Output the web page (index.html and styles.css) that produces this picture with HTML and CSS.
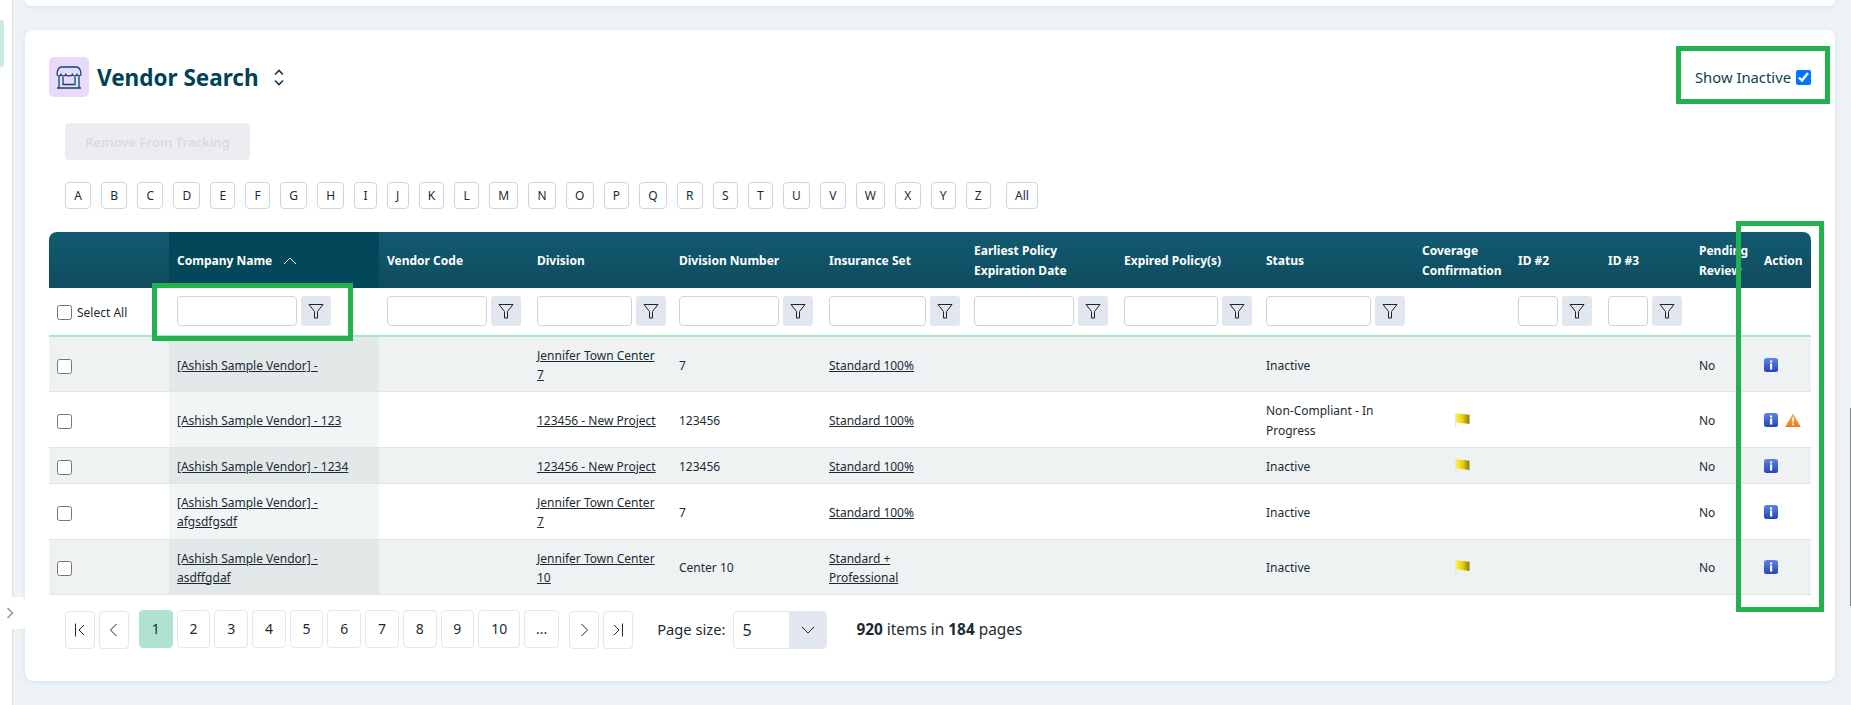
FILE: index.html
```html
<!DOCTYPE html>
<html lang="en">
<head>
    <meta charset="UTF-8">
    <meta name="viewport" content="width=device-width, initial-scale=1.0">
    <title>Vendor Search</title>
    <link rel="stylesheet" href="styles.css">
</head>
<body>

<svg class="svg-defs" aria-hidden="true">
    <defs>
        <linearGradient id="infoFill" x1="0" y1="0" x2="0" y2="1">
            <stop offset="0" stop-color="#5f86e6"/>
            <stop offset="1" stop-color="#2445b8"/>
        </linearGradient>
        <linearGradient id="warnFill" x1="0" y1="0" x2="0" y2="1">
            <stop offset="0" stop-color="#fbb450"/>
            <stop offset="1" stop-color="#ee7a12"/>
        </linearGradient>
        <linearGradient id="flagFill" x1="0" y1="0" x2="1" y2="0">
            <stop offset="0" stop-color="#fff04a"/>
            <stop offset="0.5" stop-color="#e8cf10"/>
            <stop offset="1" stop-color="#8f7a08"/>
        </linearGradient>
    </defs>
    <symbol id="funnel" viewBox="0 0 16 16">
        <path d="M1 1.5H15L9.5 8.5V15H6.5V8.5Z" fill="none" stroke="#222" stroke-width="1"/>
    </symbol>
    <symbol id="info" viewBox="0 0 14 14">
        <rect x="0" y="0" width="14" height="14" rx="2.5" fill="url(#infoFill)"/>
        <rect x="6" y="2.5" width="2.2" height="2" fill="#fff"/>
        <rect x="6" y="5.5" width="2.2" height="6" fill="#fff"/>
    </symbol>
    <symbol id="warn" viewBox="0 0 16 14">
        <path d="M8 0.5L15.8 14H0.2Z" fill="url(#warnFill)"/>
        <rect x="7.2" y="4.5" width="1.6" height="5" fill="#fff"/>
        <rect x="7.2" y="10.5" width="1.6" height="1.7" fill="#fff"/>
    </symbol>
    <symbol id="flag" viewBox="0 0 15 14">
        <path d="M0.8 1V14" stroke="#e3e3d8" stroke-width="1.2"/>
        <path d="M1 0.3C5 0.6 9 1.2 14.5 1.8V11C9 10.6 5 10 1 9.3Z" fill="url(#flagFill)"/>
    </symbol>
</svg>

<div class="page">
    <div class="side-strip">
        <span class="side-tab"></span>
    </div>

    <div class="side-toggle">
        <svg width="8" height="12" viewBox="0 0 8 12"><path d="M1.5 1L6.5 6L1.5 11" fill="none" stroke="#8e9aa6" stroke-width="1.6"/></svg>
    </div>

    <main class="content">
        <div class="top-card"></div>

        <section class="card">
            <div class="card-head">
                <div class="title-group">
                    <span class="title-icon">
                        <svg width="26" height="23" viewBox="0 0 26 23" fill="none" stroke="#0c4a5e" stroke-width="1.3">
                            <path d="M5.5 1H20.5C23 1 25 4.5 25 8C25 10.4 21.8 10.4 21 8.4C20.2 10.4 17.2 10.4 16.4 8.4C15.6 10.4 10.6 10.4 9.8 8.4C9 10.4 5.8 10.4 5 8.4C4.2 10.4 1 10.4 1 8C1 4.5 3 1 5.5 1Z"/>
                            <path d="M3 10.5V21.5M23 10.5V21.5M1 22H25"/>
                            <path d="M7 11V18.5H19V11"/>
                        </svg>
                    </span>
                    <h1 class="title">Vendor Search</h1>
                    <svg class="title-toggle" width="10" height="17" viewBox="0 0 10 17" fill="none" stroke="#17344a" stroke-width="1.6">
                        <path d="M1 5.5L5 1.5L9 5.5"/>
                        <path d="M1 11.5L5 15.5L9 11.5"/>
                    </svg>
                </div>
                <label class="show-inactive">
                    Show Inactive
                    <input type="checkbox" checked>
                </label>
            </div>

            <button class="remove-button" disabled>Remove From Tracking</button>

            <div class="alpha-row">
                <a class="alpha">A</a><a class="alpha">B</a><a class="alpha">C</a><a class="alpha">D</a><a class="alpha">E</a><a class="alpha">F</a><a class="alpha">G</a><a class="alpha">H</a><a class="alpha">I</a><a class="alpha">J</a><a class="alpha">K</a><a class="alpha">L</a><a class="alpha">M</a><a class="alpha">N</a><a class="alpha">O</a><a class="alpha">P</a><a class="alpha">Q</a><a class="alpha">R</a><a class="alpha">S</a><a class="alpha">T</a><a class="alpha">U</a><a class="alpha">V</a><a class="alpha">W</a><a class="alpha">X</a><a class="alpha">Y</a><a class="alpha">Z</a><a class="alpha alpha-all">All</a>
            </div>

            <table class="grid">
                <colgroup>
                    <col class="c-120"><col class="c-210"><col class="c-150"><col class="c-142"><col class="c-150"><col class="c-145"><col class="c-150"><col class="c-142"><col class="c-156"><col class="c-96"><col class="c-90"><col class="c-91"><col class="c-65"><col class="c-55">
                </colgroup>
                <thead>
                    <tr class="head-row">
                        <th></th>
                        <th class="sorted">Company Name
                            <svg class="sort-arrow" width="14" height="8" viewBox="0 0 14 8" fill="none" stroke="#fff" stroke-width="1"><path d="M1 7L7 1L13 7"/></svg>
                        </th>
                        <th>Vendor Code</th>
                        <th>Division</th>
                        <th>Division Number</th>
                        <th>Insurance Set</th>
                        <th>Earliest Policy Expiration Date</th>
                        <th>Expired Policy(s)</th>
                        <th>Status</th>
                        <th>Coverage Confirmation</th>
                        <th>ID #2</th>
                        <th>ID #3</th>
                        <th>Pending Review</th>
                        <th>Action</th>
                    </tr>
                    <tr class="filter-row">
                        <td><label class="select-all"><input type="checkbox" class="row-check"> Select All</label></td>
                        <td><div class="filter"><input class="filter-input f-120"><button class="filter-button"><svg><use href="#funnel"/></svg></button></div></td>
                        <td><div class="filter"><input class="filter-input f-100"><button class="filter-button"><svg><use href="#funnel"/></svg></button></div></td>
                        <td><div class="filter"><input class="filter-input f-95"><button class="filter-button"><svg><use href="#funnel"/></svg></button></div></td>
                        <td><div class="filter"><input class="filter-input f-100"><button class="filter-button"><svg><use href="#funnel"/></svg></button></div></td>
                        <td><div class="filter"><input class="filter-input f-97"><button class="filter-button"><svg><use href="#funnel"/></svg></button></div></td>
                        <td><div class="filter"><input class="filter-input f-100"><button class="filter-button"><svg><use href="#funnel"/></svg></button></div></td>
                        <td><div class="filter"><input class="filter-input f-94"><button class="filter-button"><svg><use href="#funnel"/></svg></button></div></td>
                        <td><div class="filter"><input class="filter-input f-105"><button class="filter-button"><svg><use href="#funnel"/></svg></button></div></td>
                        <td></td>
                        <td><div class="filter"><input class="filter-input f-40"><button class="filter-button"><svg><use href="#funnel"/></svg></button></div></td>
                        <td><div class="filter"><input class="filter-input f-40"><button class="filter-button"><svg><use href="#funnel"/></svg></button></div></td>
                        <td></td>
                        <td></td>
                    </tr>
                </thead>
                <tbody>
                    <tr class="row-a">
                        <td><input type="checkbox" class="row-check"></td>
                        <td class="sorted"><a>[Ashish Sample Vendor] -</a></td>
                        <td></td>
                        <td><a>Jennifer Town Center 7</a></td>
                        <td>7</td>
                        <td><a>Standard 100%</a></td>
                        <td></td><td></td>
                        <td>Inactive</td>
                        <td></td><td></td><td></td>
                        <td>No</td>
                        <td><svg class="act"><use href="#info"/></svg></td>
                    </tr>
                    <tr>
                        <td><input type="checkbox" class="row-check"></td>
                        <td class="sorted"><a>[Ashish Sample Vendor] - 123</a></td>
                        <td></td>
                        <td><a>123456 - New Project</a></td>
                        <td>123456</td>
                        <td><a>Standard 100%</a></td>
                        <td></td><td></td>
                        <td>Non-Compliant - In Progress</td>
                        <td><svg class="flag"><use href="#flag"/></svg></td>
                        <td></td><td></td>
                        <td>No</td>
                        <td><svg class="act"><use href="#info"/></svg><svg class="act warn"><use href="#warn"/></svg></td>
                    </tr>
                    <tr class="row-a">
                        <td><input type="checkbox" class="row-check"></td>
                        <td class="sorted"><a>[Ashish Sample Vendor] - 1234</a></td>
                        <td></td>
                        <td><a>123456 - New Project</a></td>
                        <td>123456</td>
                        <td><a>Standard 100%</a></td>
                        <td></td><td></td>
                        <td>Inactive</td>
                        <td><svg class="flag"><use href="#flag"/></svg></td>
                        <td></td><td></td>
                        <td>No</td>
                        <td><svg class="act"><use href="#info"/></svg></td>
                    </tr>
                    <tr>
                        <td><input type="checkbox" class="row-check"></td>
                        <td class="sorted"><a>[Ashish Sample Vendor] - afgsdfgsdf</a></td>
                        <td></td>
                        <td><a>Jennifer Town Center 7</a></td>
                        <td>7</td>
                        <td><a>Standard 100%</a></td>
                        <td></td><td></td>
                        <td>Inactive</td>
                        <td></td><td></td><td></td>
                        <td>No</td>
                        <td><svg class="act"><use href="#info"/></svg></td>
                    </tr>
                    <tr class="row-a">
                        <td><input type="checkbox" class="row-check"></td>
                        <td class="sorted"><a>[Ashish Sample Vendor] - asdffgdaf</a></td>
                        <td></td>
                        <td><a>Jennifer Town Center 10</a></td>
                        <td>Center 10</td>
                        <td><a>Standard + Professional</a></td>
                        <td></td><td></td>
                        <td>Inactive</td>
                        <td><svg class="flag"><use href="#flag"/></svg></td>
                        <td></td><td></td>
                        <td>No</td>
                        <td><svg class="act"><use href="#info"/></svg></td>
                    </tr>
                </tbody>
            </table>

            <div class="pager">
                <button class="page-nav">
                    <svg width="14" height="14" viewBox="0 0 14 14" fill="none" stroke="#222" stroke-width="1"><path d="M2.5 0.5V13.5"/><path d="M11 2L6 7L11 12"/></svg>
                </button>
                <button class="page-nav">
                    <svg width="14" height="14" viewBox="0 0 14 14" fill="none" stroke="#222" stroke-width="1"><path d="M9.5 1L3.5 7L9.5 13"/></svg>
                </button>
                <div class="page-numbers">
                    <button class="page-num current">1</button>
                    <button class="page-num">2</button>
                    <button class="page-num">3</button>
                    <button class="page-num">4</button>
                    <button class="page-num">5</button>
                    <button class="page-num">6</button>
                    <button class="page-num">7</button>
                    <button class="page-num">8</button>
                    <button class="page-num">9</button>
                    <button class="page-num wide">10</button>
                    <button class="page-num">...</button>
                </div>
                <button class="page-nav next">
                    <svg width="14" height="14" viewBox="0 0 14 14" fill="none" stroke="#222" stroke-width="1"><path d="M4.5 1L10.5 7L4.5 13"/></svg>
                </button>
                <button class="page-nav">
                    <svg width="14" height="14" viewBox="0 0 14 14" fill="none" stroke="#222" stroke-width="1"><path d="M3 2L8 7L3 12"/><path d="M11.5 0.5V13.5"/></svg>
                </button>
                <span class="size-label">Page size:</span>
                <div class="size-select">
                    <span class="size-value">5</span>
                    <span class="size-arrow">
                        <svg width="14" height="8" viewBox="0 0 14 8" fill="none" stroke="#222" stroke-width="1"><path d="M1 1L7 7L13 1"/></svg>
                    </span>
                </div>
                <span class="page-info"><b>920</b> items in <b>184</b> pages</span>
            </div>
        </section>
    </main>

    <!-- green boxes drawn on top of the screenshot -->
    <div class="mark mark-inactive"></div>
    <div class="mark mark-filter"></div>
    <div class="mark mark-action"></div>
    <div class="scroll-sliver"></div>
</div>

</body>
</html>
```

FILE: styles.css
```css
* {
    box-sizing: border-box;
}

body {
    font-family: "Noto Sans", "Open Sans", sans-serif;
    font-size: 12px;
    color: #1c2b33;
    margin: 0;
    background-color: #edf2f6;
}

.svg-defs {
    position: absolute;
    width: 0;
    height: 0;
}

.page {
    position: relative;
    display: flex;
    width: 1851px;
    height: 705px;
    overflow: hidden;
}

.side-strip {
    width: 13px;
    flex-shrink: 0;
    padding-top: 20px;
    background-color: #fff;
    border-right: 1px solid #dde2e7;
}

.side-tab {
    display: block;
    width: 4px;
    height: 47px;
    background-color: #c9ebdd;
    border-radius: 0 3px 3px 0;
}

.side-toggle {
    position: absolute;
    left: 0;
    top: 597px;
    width: 25px;
    height: 32px;
    padding-left: 6px;
    display: flex;
    align-items: center;
    background-color: #fff;
    border-radius: 0 4px 4px 0;
}

.content {
    flex: 1;
    padding: 0 16px 0 12px;
}

.top-card {
    height: 6px;
    background-color: #fff;
    border-radius: 0 0 8px 8px;
    box-shadow: 0 1px 4px rgba(0, 0, 0, 0.08);
}

.card {
    height: 651px;
    margin-top: 24px;
    padding: 27px 24px 0;
    background-color: #fff;
    border-radius: 8px;
    box-shadow: 0 1px 4px rgba(0, 0, 0, 0.08);
}

.card-head {
    display: flex;
    align-items: center;
    justify-content: space-between;
    height: 40px;
}

.title-group {
    display: flex;
    align-items: center;
}

.title-icon {
    display: flex;
    align-items: center;
    justify-content: center;
    width: 40px;
    height: 40px;
    background-color: #e8d9fd;
    border-radius: 5px;
}

.title {
    margin: 0 0 0 8px;
    font-size: 22.5px;
    font-weight: 700;
    color: #004358;
}

.title-toggle {
    margin-left: 15px;
}

.show-inactive {
    display: flex;
    align-items: center;
    font-size: 14.8px;
    color: #0b3f52;
}

.show-inactive input {
    width: 15px;
    height: 15px;
    margin: 0 0 0 5px;
}

.remove-button {
    display: block;
    width: 185px;
    height: 37px;
    margin: 26px 0 0 16px;
    font-family: inherit;
    font-size: 13px;
    font-weight: 600;
    color: #d9dbe0;
    background-color: #ecedf1;
    border: none;
    border-radius: 4px;
}

.alpha-row {
    display: flex;
    gap: 10px;
    margin: 22px 0 23px 16px;
}

.alpha {
    height: 27px;
    padding: 0 8.2px;
    line-height: 26px;
    font-size: 12px;
    border: 1px solid #cdd6e0;
    border-radius: 4px;
}

.alpha-all {
    margin-left: 5px;
}

.grid {
    width: 1762px;
    table-layout: fixed;
    border-collapse: separate;
    border-spacing: 0;
}

.c-120 { width: 120px; }
.c-210 { width: 210px; }
.c-150 { width: 150px; }
.c-145 { width: 145px; }
.c-142 { width: 142px; }
.c-156 { width: 156px; }
.c-96 { width: 96px; }
.c-90 { width: 90px; }
.c-91 { width: 91px; }
.c-65 { width: 65px; }
.c-55 { width: 55px; }

.head-row th {
    height: 56px;
    padding: 2px 8px 0;
    text-align: left;
    font-size: 12px;
    font-weight: 700;
    line-height: 20px;
    color: #fff;
    background: linear-gradient(#125a70, #0f4c5f);
}

.head-row th:first-child {
    border-top-left-radius: 8px;
}

.head-row th:last-child {
    border-top-right-radius: 8px;
}

.head-row th.sorted {
    background: #03475a;
}

.sort-arrow {
    margin-left: 8px;
}

.filter-row td {
    height: 49px;
    padding: 0 8px 2px;
    vertical-align: middle;
    border-bottom: 2px solid #b0e3cf;
}

.filter {
    display: flex;
    gap: 4px;
}

.filter-input {
    flex-shrink: 0;
    height: 30px;
    background-color: #fff;
    border: 1px solid #cfd3d8;
    border-radius: 4px;
}

.f-120 { width: 120px; }
.f-105 { width: 105px; }
.f-100 { width: 100px; }
.f-97 { width: 97px; }
.f-95 { width: 95px; }
.f-94 { width: 94px; }
.f-40 { width: 40px; }

.filter-button {
    flex-shrink: 0;
    display: flex;
    align-items: center;
    justify-content: center;
    width: 30px;
    height: 30px;
    padding: 0;
    background-color: #e2e7ef;
    border: none;
    border-radius: 3px;
}

.filter-button svg {
    width: 16px;
    height: 16px;
}

.select-all {
    display: flex;
    align-items: center;
    gap: 5px;
    margin-top: 4px;
    white-space: nowrap;
}

.row-check {
    display: block;
    width: 15px;
    height: 15px;
    margin: 0;
}

tbody .row-check {
    margin-top: 2px;
}

tbody td {
    padding: 9px 8px 7px;
    line-height: 19.2px;
    vertical-align: middle;
    border-bottom: 1px solid #dfe4e8;
}

tbody td.sorted {
    background-color: #f1f5f6;
}

.row-a td {
    background-color: #eef2f3;
}

.row-a td.sorted {
    background-color: #e2e9e8;
}

tbody a {
    text-decoration: underline;
}

.act {
    display: inline-block;
    width: 14px;
    height: 14px;
    margin-bottom: 3px;
    vertical-align: middle;
}

.act.warn {
    width: 16px;
    margin-left: 7px;
}

.flag {
    display: block;
    width: 15px;
    height: 14px;
    margin: -1px 0 0 33px;
}

.pager {
    display: flex;
    align-items: flex-start;
    margin: 15px 0 0 16px;
}

.pager button {
    font-family: inherit;
    font-size: 14px;
    color: #1c2b33;
    background-color: #fff;
    border: 1px solid #e3e8ef;
    border-radius: 4px;
    padding: 0;
}

.page-nav {
    display: flex;
    align-items: center;
    justify-content: center;
    width: 30px;
    height: 38px;
    margin: 1px 4px 0 0;
}

.page-nav.next {
    margin-left: 10px;
}

.page-numbers {
    display: flex;
    gap: 4px;
    margin-left: 6px;
}

.page-num {
    width: 33.7px;
    height: 38px;
}

.page-num.wide {
    width: 42px;
}

.page-num:last-child {
    width: 35px;
}

.pager .page-num.current {
    background-color: #b0e3cf;
    border-color: #b0e3cf;
}

.size-label {
    align-self: center;
    margin-left: 20px;
    font-size: 14.7px;
}

.size-select {
    display: flex;
    width: 94px;
    height: 38px;
    margin: 1px 0 0 8px;
    overflow: hidden;
    border: 1px solid #e3e8ef;
    border-radius: 4px;
}

.size-value {
    flex: 1;
    padding-left: 8px;
    line-height: 36px;
    font-size: 16px;
}

.size-arrow {
    display: flex;
    align-items: center;
    justify-content: center;
    width: 37px;
    background-color: #e2e7ef;
}

.page-info {
    align-self: center;
    margin-left: 29px;
    font-size: 15.4px;
}

.mark {
    position: absolute;
    border: 5px solid #22b14c;
}

.mark-inactive {
    left: 1676px;
    top: 46px;
    width: 154px;
    height: 58px;
}

.mark-filter {
    left: 152px;
    top: 283px;
    width: 201px;
    height: 58px;
}

.mark-action {
    left: 1736px;
    top: 221px;
    width: 88px;
    height: 391px;
}

.scroll-sliver {
    position: absolute;
    right: 0;
    top: 408px;
    width: 1px;
    height: 198px;
    background-color: #8a8a8a;
}
```
